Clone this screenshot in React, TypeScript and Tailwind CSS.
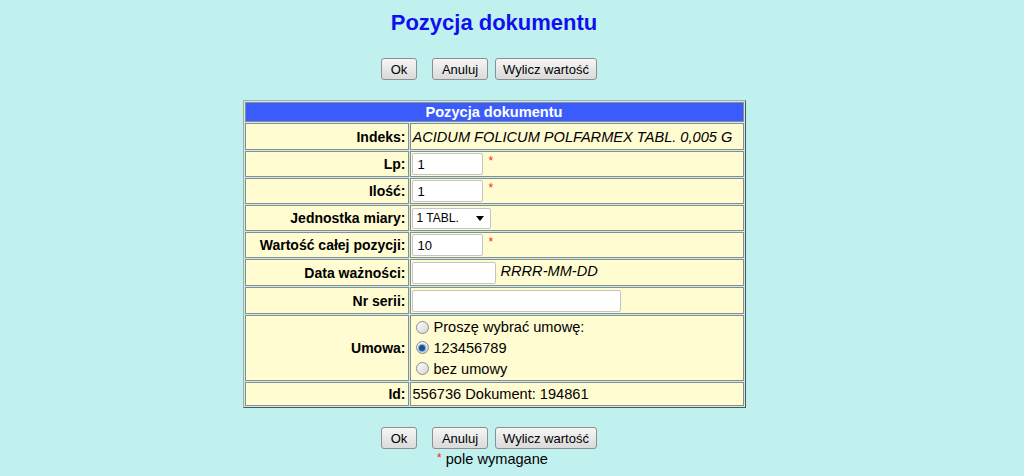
import React from "react";

const F = { fontFamily: '"Liberation Sans", Arial, sans-serif' };

function Btn({ w, children }: { w: string; children: React.ReactNode }) {
  return (
    <button
      className={`${w} h-[22px] rounded-[3px] border border-[#8e8e8e] bg-gradient-to-b from-[#f6f6f6] to-[#dadada] text-[13px] leading-none text-black`}
      style={F}
    >
      {children}
    </button>
  );
}

function Buttons() {
  return (
    <div className="flex justify-center pr-[10px]">
      <Btn w="w-[36px]">Ok</Btn>
      <div className="w-[15px]" />
      <Btn w="w-[56px]">Anuluj</Btn>
      <div className="w-[7px]" />
      <Btn w="w-[102px]">Wylicz wartość</Btn>
    </div>
  );
}

function Star() {
  return <span className="ml-[6px] relative -top-[3px] text-[12px] text-[#ff2020]">*</span>;
}

function Radio({ checked }: { checked?: boolean }) {
  return (
    <span className="inline-flex items-center justify-center w-[13px] h-[13px] rounded-full border border-[#8a8a8a] bg-gradient-to-br from-[#ffffff] to-[#d4d4d4] mr-[5px] ml-[4px]">
      {checked && <span className="w-[6px] h-[6px] rounded-full bg-[#1e4f86] shadow-[0_0_1px_1px_#6fa9de]" />}
    </span>
  );
}

function Input({ w, value }: { w: string; value?: string }) {
  return (
    <input
      readOnly
      value={value ?? ""}
      className={`${w} h-[22px] border border-[#c4c4c4] rounded-[2px] bg-white px-[5px] text-[13px] leading-[16px] text-black align-middle outline-none`}
      style={F}
    />
  );
}

const labelCls =
  "w-[164px] border border-[#8c8c8c] bg-[#fffcd2] text-right font-bold text-[14px] leading-[16px] pr-[2px] py-0 align-middle";
const valCls =
  "border border-[#8c8c8c] bg-[#fffcd2] text-left text-[14.6px] leading-[16px] pl-[1px] py-0 align-middle";

export default function App() {
  return (
    <div className="min-h-screen bg-[#c0f1ef] text-black" style={F}>
      <div className="w-[988px] pt-[10px]">
        <h2 className="text-center text-[22px] font-bold text-[#1010ee] leading-[26px]">
          Pozycja dokumentu
        </h2>
        <div className="mt-[22px]">
          <Buttons />
        </div>
        <table className="mx-auto mt-[20px] w-[503px] border-separate border-spacing-[1px] border border-t-[#a8a8a8] border-l-[#a8a8a8] border-r-[#555] border-b-[#555]">
          <tbody>
            <tr>
              <td
                colSpan={2}
                className="h-[20px] py-0 border border-[#8c8c8c] bg-[#3b5cfd] text-center text-[14.6px] leading-[16px] font-bold text-white"
              >
                Pozycja dokumentu
              </td>
            </tr>
            <tr>
              <td className={`${labelCls} h-[27px]`}>Indeks:</td>
              <td className={`${valCls} italic pl-[2px]`}>ACIDUM FOLICUM POLFARMEX TABL. 0,005 G</td>
            </tr>
            <tr>
              <td className={`${labelCls} h-[26px]`}>Lp:</td>
              <td className={valCls}>
                <Input w="w-[71px]" value="1" />
                <Star />
              </td>
            </tr>
            <tr>
              <td className={`${labelCls} h-[26px]`}>Ilość:</td>
              <td className={valCls}>
                <Input w="w-[71px]" value="1" />
                <Star />
              </td>
            </tr>
            <tr>
              <td className={`${labelCls} h-[26px]`}>Jednostka miary:</td>
              <td className={valCls}>
                <span className="inline-flex items-center justify-between w-[79px] h-[21px] border border-[#c4c4c4] rounded-[2px] bg-white pl-[4px] pr-[6px] align-middle text-[12px]">
                  <span>1 TABL.</span>
                  <svg width="8" height="5" viewBox="0 0 8 5">
                    <path d="M0 0h8L4 5z" fill="#000" />
                  </svg>
                </span>
              </td>
            </tr>
            <tr>
              <td className={`${labelCls} h-[26px]`}>Wartość całej pozycji:</td>
              <td className={valCls}>
                <Input w="w-[71px]" value="10" />
                <Star />
              </td>
            </tr>
            <tr>
              <td className={`${labelCls} h-[27px]`}>Data ważności:</td>
              <td className={valCls}>
                <Input w="w-[84px]" />
                <span className="ml-[5px] italic">RRRR-MM-DD</span>
              </td>
            </tr>
            <tr>
              <td className={`${labelCls} h-[27px]`}>Nr serii:</td>
              <td className={valCls}>
                <Input w="w-[209px]" />
              </td>
            </tr>
            <tr>
              <td className={`${labelCls} h-[66px]`}>Umowa:</td>
              <td className={valCls}>
                <div className="flex flex-col">
                  <div className="flex items-center h-[20px]">
                    <Radio />
                    <span>Proszę wybrać umowę:</span>
                  </div>
                  <div className="flex items-center h-[21px]">
                    <Radio checked />
                    <span>123456789</span>
                  </div>
                  <div className="flex items-center h-[21px]">
                    <Radio />
                    <span>bez umowy</span>
                  </div>
                </div>
              </td>
            </tr>
            <tr>
              <td className={`${labelCls} h-[24px]`}>Id:</td>
              <td className={`${valCls} pl-[2px]`}>556736 Dokument: 194861</td>
            </tr>
          </tbody>
        </table>
        <div className="mt-[19px]">
          <Buttons />
        </div>
        <div className="text-center text-[14.6px] leading-[16px] mt-[2px] pr-[3px]">
          <span className="text-[#ff2020] text-[12px] relative -top-[2px]">*</span> pole wymagane
        </div>
      </div>
    </div>
  );
}
